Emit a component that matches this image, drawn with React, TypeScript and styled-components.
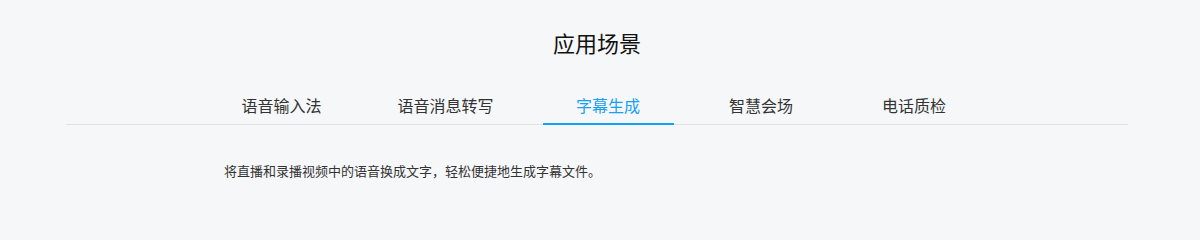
import React, { useState } from 'react'
import styled, { createGlobalStyle } from 'styled-components'

const GlobalStyle = createGlobalStyle`
  html, body {
    margin: 0;
    padding: 0;
    background: #f6f7f9;
  }
  body {
    font-family: "Noto Sans CJK SC", "Noto Sans", sans-serif;
    color: #333;
  }
`

const scenes = [
  { key: 'input', label: '语音输入法', desc: '在输入法中集成语音识别，说话即可快速输入文字，解放双手。' },
  { key: 'message', label: '语音消息转写', desc: '将语音消息实时转写为文字，方便在不便收听的场景下查看内容。' },
  { key: 'subtitle', label: '字幕生成', desc: '将直播和录播视频中的语音换成文字，轻松便捷地生成字幕文件。' },
  { key: 'meeting', label: '智慧会场', desc: '会议内容实时转写上屏，自动生成会议记录，提升会议效率。' },
  { key: 'call', label: '电话质检', desc: '将客服通话录音转写为文字，配合关键词检索，实现全量质检。' },
]

const Scenes = () => {
  const [active, setActive] = useState('subtitle')
  const current = scenes.find((s) => s.key === active)

  return (
    <Section>
      <Title>应用场景</Title>
      <TabBar>
        <TabList>
          {scenes.map((scene) => (
            <Tab
              key={scene.key}
              $active={scene.key === active}
              onClick={() => setActive(scene.key)}
            >
              {scene.label}
            </Tab>
          ))}
        </TabList>
      </TabBar>
      <Panel>{current?.desc}</Panel>
    </Section>
  )
}

const Section = styled.section`
  width: 1194px;
  height: 205px;
  box-sizing: border-box;
  padding-top: 27px;
  display: flex;
  flex-direction: column;
  align-items: center;
`

const Title = styled.h2`
  margin: 0;
  font-size: 22px;
  line-height: 30px;
  font-weight: 400;
  color: #111;
`

const TabBar = styled.div`
  width: 1062px;
  margin-top: 37px;
  border-bottom: 1px solid #e1e3e7;
  display: flex;
  justify-content: center;
`

const TabList = styled.div`
  display: flex;
  gap: 22px;
  margin-bottom: -1px;
`

const Tab = styled.div<{ $active?: boolean }>`
  min-width: 131px;
  box-sizing: border-box;
  padding: 0 27px 7px;
  text-align: center;
  font-size: 16px;
  line-height: 22px;
  cursor: pointer;
  color: ${(p) => (p.$active ? '#17a1f3' : '#333')};
  border-bottom: 2px solid ${(p) => (p.$active ? '#12a2f4' : 'transparent')};
`

const Panel = styled.div`
  width: 1062px;
  box-sizing: border-box;
  padding: 36px 0 0 158px;
  font-size: 13px;
  line-height: 20px;
  color: #333;
`

export default function App() {
  return (
    <>
      <GlobalStyle />
      <Scenes />
    </>
  )
}
